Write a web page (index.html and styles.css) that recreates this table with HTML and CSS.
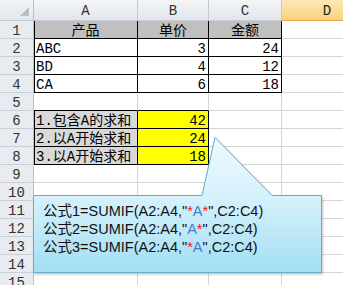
FILE: index.html
```html
<!DOCTYPE html>
<html>
<head>
<meta charset="utf-8">
<link rel="stylesheet" href="styles.css">
</head>
<body>
<div class="sheet">
  <div class="row hdr">
    <div class="rh corner"><span class="tri"></span></div>
    <div class="ch ca">A</div>
    <div class="ch cb">B</div>
    <div class="ch cc">C</div>
    <div class="ch cd sel">D</div>
  </div>
  <div class="row">
    <div class="rh">1</div>
    <div class="c ca bl br bb gray ctr">产品</div>
    <div class="c cb br bb gray ctr">单价</div>
    <div class="c cc br bb gray ctr">金额</div>
    <div class="c cd"></div>
  </div>
  <div class="row">
    <div class="rh">2</div>
    <div class="c ca bl br bb">ABC</div>
    <div class="c cb br bb num">3</div>
    <div class="c cc br bb num">24</div>
    <div class="c cd"></div>
  </div>
  <div class="row">
    <div class="rh">3</div>
    <div class="c ca bl br bb">BD</div>
    <div class="c cb br bb num">4</div>
    <div class="c cc br bb num">12</div>
    <div class="c cd"></div>
  </div>
  <div class="row">
    <div class="rh">4</div>
    <div class="c ca bl br bb">CA</div>
    <div class="c cb br bb num">6</div>
    <div class="c cc br bb num">18</div>
    <div class="c cd"></div>
  </div>
  <div class="row">
    <div class="rh">5</div>
    <div class="c ca bb"></div>
    <div class="c cb bb"></div>
    <div class="c cc"></div>
    <div class="c cd"></div>
  </div>
  <div class="row">
    <div class="rh">6</div>
    <div class="c ca bl br bb lgray">1.包含A的求和</div>
    <div class="c cb br bb yel num">42</div>
    <div class="c cc"></div>
    <div class="c cd"></div>
  </div>
  <div class="row">
    <div class="rh">7</div>
    <div class="c ca bl br bb lgray">2.以A开始求和</div>
    <div class="c cb br bb yel num">24</div>
    <div class="c cc"></div>
    <div class="c cd"></div>
  </div>
  <div class="row">
    <div class="rh">8</div>
    <div class="c ca bl br bb lgray">3.以A开始求和</div>
    <div class="c cb br bb yel num">18</div>
    <div class="c cc"></div>
    <div class="c cd"></div>
  </div>
  <div class="row"><div class="rh">9</div><div class="c ca"></div><div class="c cb"></div><div class="c cc"></div><div class="c cd"></div></div>
  <div class="row"><div class="rh">10</div><div class="c ca"></div><div class="c cb"></div><div class="c cc"></div><div class="c cd"></div></div>
  <div class="row"><div class="rh">11</div><div class="c ca"></div><div class="c cb"></div><div class="c cc"></div><div class="c cd"></div></div>
  <div class="row"><div class="rh">12</div><div class="c ca"></div><div class="c cb"></div><div class="c cc"></div><div class="c cd"></div></div>
  <div class="row"><div class="rh">13</div><div class="c ca"></div><div class="c cb"></div><div class="c cc"></div><div class="c cd"></div></div>
  <div class="row"><div class="rh">14</div><div class="c ca"></div><div class="c cb"></div><div class="c cc"></div><div class="c cd"></div></div>
  <div class="row"><div class="rh">15</div><div class="c ca"></div><div class="c cb"></div><div class="c cc"></div><div class="c cd"></div></div>

  <svg class="callout-shape" width="343" height="285" viewBox="0 0 343 285">
    <defs>
      <linearGradient id="g" x1="0" y1="0" x2="0" y2="1">
        <stop offset="0" stop-color="#eefafe"/>
        <stop offset="0.45" stop-color="#d5f1fb"/>
        <stop offset="1" stop-color="#a2def4"/>
      </linearGradient>
      <filter id="sh" x="-5%" y="-5%" width="110%" height="115%">
        <feDropShadow dx="1" dy="1.5" stdDeviation="0.8" flood-color="#6b4a4a" flood-opacity="0.35"/>
      </filter>
    </defs>
    <path d="M33.5 195.5 H202 L215 137.5 L272 195.5 H321.5 V272.5 H33.5 Z" fill="url(#g)" stroke="#5eb0cf" stroke-width="1" filter="url(#sh)"/>
  </svg>
  <div class="callout-text">
    <div class="fl">公式1=SUMIF(A2:A4,"<span class="r">*</span><span class="b">A</span><span class="r">*</span>",C2:C4)</div>
    <div class="fl">公式2=SUMIF(A2:A4,"<span class="b">A</span><span class="r">*</span>",C2:C4)</div>
    <div class="fl">公式3=SUMIF(A2:A4,"<span class="r">*</span><span class="b">A</span>",C2:C4)</div>
  </div>
</div>
</body>
</html>
```
FILE: styles.css
```css
html, body {
  margin: 0;
  padding: 0;
  background: #fff;
}
.sheet {
  position: relative;
  width: 343px;
  height: 285px;
  overflow: hidden;
  font-family: "Liberation Mono", "Noto Sans CJK SC", monospace;
  font-size: 14px;
  color: #000;
}
.row {
  display: flex;
  height: 18px;
}
.row.hdr {
  height: 21px;
}
.rh {
  flex: none;
  width: 33px;
  height: 17px;
  border-right: 1px solid #b8c0ca;
  border-bottom: 1px solid #c9cfd6;
  background: #e8ebef;
  color: #333;
  text-align: center;
  line-height: 20px;
  font-size: 14px;
  overflow: hidden;
}
.hdr .rh, .ch {
  height: 20px;
  line-height: 23px;
  border-bottom: 1px solid #c5ccd5;
}
.corner {
  position: relative;
  background: linear-gradient(#f3f4f6, #e3e7ec);
}
.tri {
  position: absolute;
  right: 4px;
  bottom: 4px;
  width: 0;
  height: 0;
  border-left: 9px solid transparent;
  border-bottom: 9px solid #b9bec5;
}
.ch {
  flex: none;
  background: linear-gradient(#f4f5f7, #e2e6eb);
  border-right: 1px solid #c5cad1;
  color: #333;
  text-align: center;
  font-size: 14px;
}
.ch.sel {
  background: linear-gradient(#fce8b6, #f8d27c);
  border-bottom-color: #eea443;
  color: #222;
}
.ca { width: 103px; }
.cb { width: 70px; }
.cc { width: 72px; }
.cd { width: 90px; }
.c {
  flex: none;
  height: 17px;
  line-height: 21px;
  border-right: 1px solid #d6d6d6;
  border-bottom: 1px solid #d6d6d6;
  padding: 0 2px;
  box-sizing: content-box;
  white-space: nowrap;
  overflow: hidden;
}
.c.ca { width: 99px; }
.c.cb { width: 66px; }
.c.cc { width: 68px; }
.c.cd { width: 86px; }
.c.br { border-right-color: #000; }
.c.bb { border-bottom-color: #000; }
.c.bl { box-shadow: inset 1px 0 0 #000; }
.gray { background: #c0c0c0; }
.lgray { background: #d9d9d9; }
.yel { background: #ffff00; }
.ctr { text-align: center; }
.num { text-align: right; }

.callout-shape {
  position: absolute;
  left: 0;
  top: 0;
}
.callout-text {
  position: absolute;
  left: 43px;
  top: 202px;
  font-family: "Liberation Sans", "Noto Sans CJK SC", sans-serif;
  font-size: 14.5px;
  color: #111;
}
.fl {
  height: 18px;
  line-height: 18px;
  white-space: nowrap;
}
.r { color: #f01818; }
.b { color: #3b7fd0; }
```
